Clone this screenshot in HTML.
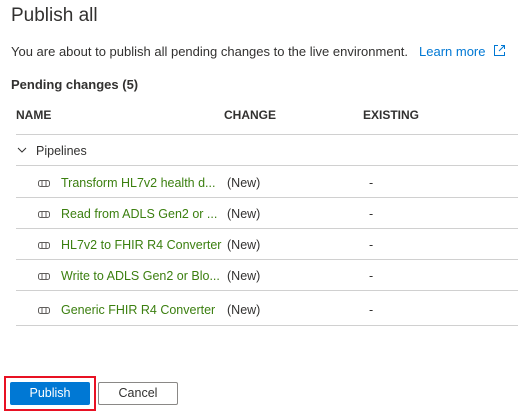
<!DOCTYPE html><html><head><style>
body{margin:0;width:518px;height:412px;background:#fff;font-family:"Liberation Sans",sans-serif;color:#323130;position:relative;overflow:hidden}
.a{position:absolute;white-space:nowrap}
.t{font-size:12.5px}
.line{position:absolute;left:16px;right:0;height:1px;background:#d0d0d0}
.g{color:#3b7f0f}
.ic{position:absolute;left:38px;width:12px;height:7px}
</style></head><body>
<div class="a" style="left:11px;top:5px;font-size:19px">Publish all</div>
<div class="a" style="left:11px;top:44px;font-size:13px">You are about to publish all pending changes to the live environment.</div>
<div class="a" style="left:419px;top:44px;font-size:13px;color:#0078d4">Learn more</div>
<svg class="a" style="left:493px;top:44px" width="13" height="13" viewBox="0 0 13 13"><path d="M5 1.5H1.5v10h10V8M8 1.5h3.5V5M11.5 1.5L6 7" fill="none" stroke="#0078d4" stroke-width="1"/></svg>
<div class="a" style="left:11px;top:77px;font-weight:bold;font-size:13px">Pending changes (5)</div>
<div class="a" style="left:16px;top:108px;font-size:12px;font-weight:bold">NAME</div>
<div class="a" style="left:224px;top:108px;font-size:12px;font-weight:bold">CHANGE</div>
<div class="a" style="left:363px;top:108px;font-size:12px;font-weight:bold">EXISTING</div>
<div class="line" style="top:134px"></div>
<svg class="a" style="left:17px;top:147px" width="10" height="7"><path d="M1 1l4 4 4-4" fill="none" stroke="#323130"/></svg>
<div class="a t" style="left:36px;top:144px">Pipelines</div>
<div class="line" style="top:165px"></div>
<div class="a" style="left:4px;top:376px;width:88px;height:31px;border:2px solid #e81123"></div>
<div class="a" style="left:10px;top:382px;width:80px;height:23px;background:#0078d4;border-radius:2px;color:#fff;font-size:12.5px;text-align:center;line-height:23px">Publish</div>
<div class="a" style="left:98px;top:382px;width:78px;height:21px;border:1px solid #8a8886;border-radius:2px;font-size:12.5px;text-align:center;line-height:21px">Cancel</div>
<div class="a t g" style="left:61px;top:176px">Transform HL7v2 health d...</div>
<div class="a t g" style="left:61px;top:207px">Read from ADLS Gen2 or ...</div>
<div class="a t g" style="left:61px;top:238px">HL7v2 to FHIR R4 Converter</div>
<div class="a t g" style="left:61px;top:269px">Write to ADLS Gen2 or Blo...</div>
<div class="a t g" style="left:61px;top:303px">Generic FHIR R4 Converter</div>
<div class="a t" style="left:227px;top:176px">(New)</div>
<div class="a t" style="left:227px;top:207px">(New)</div>
<div class="a t" style="left:227px;top:238px">(New)</div>
<div class="a t" style="left:227px;top:269px">(New)</div>
<div class="a t" style="left:227px;top:303px">(New)</div>
<div class="a t" style="left:369px;top:176px">-</div>
<div class="a t" style="left:369px;top:207px">-</div>
<div class="a t" style="left:369px;top:238px">-</div>
<div class="a t" style="left:369px;top:269px">-</div>
<div class="a t" style="left:369px;top:303px">-</div>
<div class="line" style="top:197px"></div>
<div class="line" style="top:228px"></div>
<div class="line" style="top:259px"></div>
<div class="line" style="top:290px"></div>
<div class="line" style="top:325px"></div>
<svg class="ic" style="top:180px" viewBox="0 0 12 7"><rect x=".5" y=".5" width="11" height="6" rx="2" fill="none" stroke="#605e5c"/><path d="M4 .5v6M8 .5v6" stroke="#605e5c"/></svg>
<svg class="ic" style="top:211px" viewBox="0 0 12 7"><rect x=".5" y=".5" width="11" height="6" rx="2" fill="none" stroke="#605e5c"/><path d="M4 .5v6M8 .5v6" stroke="#605e5c"/></svg>
<svg class="ic" style="top:242px" viewBox="0 0 12 7"><rect x=".5" y=".5" width="11" height="6" rx="2" fill="none" stroke="#605e5c"/><path d="M4 .5v6M8 .5v6" stroke="#605e5c"/></svg>
<svg class="ic" style="top:273px" viewBox="0 0 12 7"><rect x=".5" y=".5" width="11" height="6" rx="2" fill="none" stroke="#605e5c"/><path d="M4 .5v6M8 .5v6" stroke="#605e5c"/></svg>
<svg class="ic" style="top:307px" viewBox="0 0 12 7"><rect x=".5" y=".5" width="11" height="6" rx="2" fill="none" stroke="#605e5c"/><path d="M4 .5v6M8 .5v6" stroke="#605e5c"/></svg>
</body></html>
